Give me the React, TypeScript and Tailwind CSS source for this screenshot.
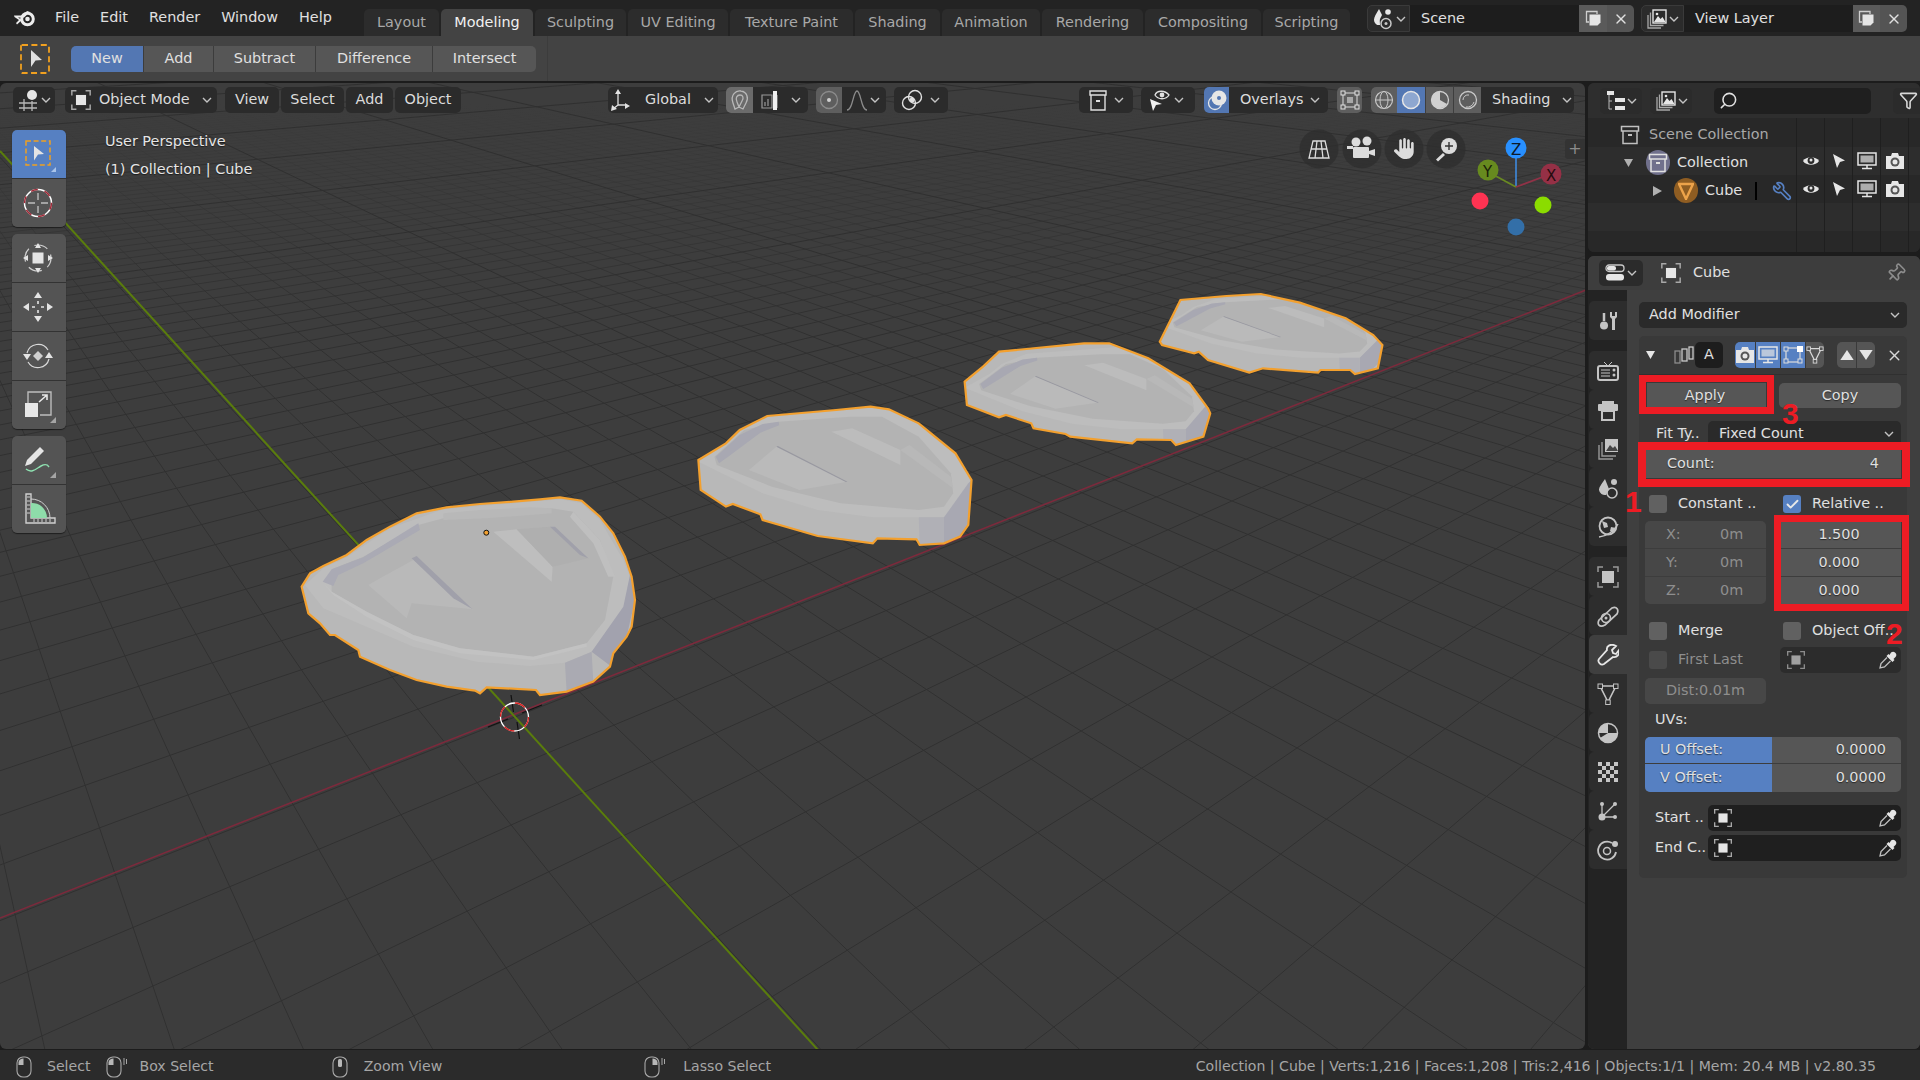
import { Search, Filter, Pin, X, Wrench, Check } from "lucide-react";
import { FaHand } from "react-icons/fa6";
import type { ReactNode } from "react";

const shadow = "[text-shadow:0_1px_1px_rgba(0,0,0,0.55)]";

/* ---------- small icons ---------- */
function Chev({ className = "" }: { className?: string }) {
  return (
    <svg width="10" height="6" viewBox="0 0 10 6" className={className}>
      <path d="M1 1l4 4 4-4" fill="none" stroke="#c4c4c4" strokeWidth="1.4" />
    </svg>
  );
}

function ObjIcon({ size = 22, fill = "#e6e6e6", line = "#a8a8a8" }: { size?: number; fill?: string; line?: string }) {
  return (
    <svg width={size} height={size} viewBox="0 0 24 24">
      <path d="M2 7V2h5M17 2h5v5M22 17v5h-5M7 22H2v-5" fill="none" stroke={line} strokeWidth="1.6" />
      <rect x="6.5" y="6.5" width="11" height="11" fill={fill} />
    </svg>
  );
}

function SelectIcon() {
  return (
    <svg width="32" height="32" viewBox="0 0 32 32">
      <rect x="2" y="2" width="28" height="28" fill="none" stroke="#f0a020" strokeWidth="1.8" strokeDasharray="6 3.4" rx="1" />
      <path d="M12 7l11 10-6.5 .5L12 24z" fill="#e0e0e0" />
    </svg>
  );
}

function Logo() {
  return (
    <svg width="23" height="18" viewBox="0 0 23 18">
      <circle cx="14.5" cy="10" r="5.8" fill="none" stroke="#ececec" strokeWidth="3" />
      <path d="M1 6.5h9l4-4.500 3 1-6 5.500H5l4 2.500-5 4.500-1-1.500 3-3-4.500-3z" fill="#ececec" />
      <circle cx="14.500" cy="10" r="2.300" fill="#ececec" />
    </svg>
  );
}

function ViewIcon() {
  return (
    <svg width="22" height="22" viewBox="0 0 22 22">
      <circle cx="14" cy="6" r="5" fill="#e6e6e6" />
      <path d="M1 14h18M1 19h18M6 10v12M14 12v10" stroke="#b8b8b8" strokeWidth="1.3" fill="none" />
    </svg>
  );
}

function CollectionIcon({ color = "#d0d0d0" }: { color?: string }) {
  return (
    <svg width="20" height="20" viewBox="0 0 20 20">
      <path d="M1.500 1.500h17v4.500h-17zM3 6v12.500h14V6" fill="none" stroke={color} strokeWidth="1.5" />
      <rect x="8" y="9" width="4" height="2" fill={color} />
    </svg>
  );
}

function LayersIcon() {
  return (
    <svg width="22" height="22" viewBox="0 0 22 22">
      <path d="M2 7v13h13M4.500 4.500v13h13" fill="none" stroke="#a8a8a8" strokeWidth="1.300" />
      <rect x="7" y="2" width="13" height="13" fill="none" stroke="#e6e6e6" strokeWidth="1.400" />
      <path d="M8 14l4-6 2.500 3 2-2 3 5z" fill="#e6e6e6" />
      <circle cx="11" cy="6" r="1.300" fill="#e6e6e6" />
    </svg>
  );
}

function SceneIcon() {
  return (
    <svg width="24" height="24" viewBox="0 0 24 24">
      <path d="M8 2C5 7 3 10 3 13a5 5 0 0 0 6 5" fill="#e6e6e6" />
      <path d="M8 2l3 6-3 6z" fill="#e6e6e6" />
      <circle cx="15" cy="16.500" r="5" fill="none" stroke="#c8c8c8" strokeWidth="1.500" />
      <circle cx="15" cy="16.500" r="1.500" fill="#c8c8c8" />
      <circle cx="17" cy="5" r="2.800" fill="#e6e6e6" />
    </svg>
  );
}

function Dup() {
  return (
    <svg width="17" height="17" viewBox="0 0 17 17">
      <path d="M4 12H1.500V1.500H12V4" fill="none" stroke="#cfcfcf" strokeWidth="1.300" />
      <path d="M4.500 4.500h11v8l-3 3h-8z" fill="#e6e6e6" />
    </svg>
  );
}

function Eye() {
  return (
    <svg width="18" height="14" viewBox="0 0 18 14">
      <path d="M1 7c3-5 13-5 16 0-3 5-13 5-16 0z" fill="#e6e6e6" />
      <circle cx="9" cy="6.500" r="3.400" fill="#2b2b2b" />
      <circle cx="9" cy="6" r="1.500" fill="#e6e6e6" />
    </svg>
  );
}

function Arrow() {
  return (
    <svg width="14" height="16" viewBox="0 0 14 16">
      <path d="M1 1l12 6.500-5 1.500-3 6z" fill="#e6e6e6" />
    </svg>
  );
}

function Monitor({ stroke = "#e6e6e6" }: { stroke?: string }) {
  return (
    <svg width="20" height="18" viewBox="0 0 20 18">
      <rect x="1" y="1" width="18" height="12" fill="none" stroke={stroke} strokeWidth="1.500" />
      <rect x="3.500" y="3.500" width="13" height="7" fill={stroke} opacity=".7" />
      <path d="M10 13v3M5 16.500h10" stroke={stroke} strokeWidth="1.500" />
    </svg>
  );
}

function Camera() {
  return (
    <svg width="20" height="18" viewBox="0 0 20 18">
      <path d="M1 4h5l1-3h6l1 3h5v13H1z" fill="#e6e6e6" />
      <circle cx="10" cy="10" r="4.500" fill="#555" />
      <circle cx="10" cy="10" r="2.500" fill="#e6e6e6" />
    </svg>
  );
}

function MeshIcon({ stroke = "#d8d8d8" }: { stroke?: string }) {
  return (
    <svg width="20" height="20" viewBox="0 0 20 20">
      <path d="M3 3h14l-7 14z" fill="none" stroke={stroke} strokeWidth="1.400" />
      <rect x="1" y="1" width="4" height="4" fill="#555" stroke={stroke} />
      <rect x="15" y="1" width="4" height="4" fill="#555" stroke={stroke} />
      <rect x="8" y="15" width="4" height="4" fill="#555" stroke={stroke} />
    </svg>
  );
}

function Caret({ up }: { up?: boolean }) {
  return (
    <svg width="14" height="10" viewBox="0 0 12 9">
      <path d={up ? "M0 9L6 0l6 9z" : "M0 0l6 9 6-9z"} fill="#e6e6e6" />
    </svg>
  );
}

function Dropper() {
  return (
    <svg width="20" height="20" viewBox="0 0 20 20" className="ml-auto mr-[3px]">
      <path d="M13 2.500a3.200 3.200 0 0 1 4.500 4.500l-2 2 1 1-2 2-6-6 2-2 1 1z" fill="#e6e6e6" />
      <path d="M9 7.500l-6 6-1 4.500 4.500-1 6-6" fill="none" stroke="#c0c0c0" strokeWidth="1.300" />
    </svg>
  );
}

/* left tool strip */
const corner = <path d="M36 36h-6l6-6z" fill="#a5a5a5" />;
const tools: { icon: ReactNode; on?: boolean; last?: boolean }[][] = [
  [
    { on: true, icon: <><rect x="6" y="5" width="24" height="24" fill="none" stroke="#f0a020" strokeWidth="1.500" strokeDasharray="5 2.600" /><path d="M14 10l10 8-6 .5-4 6z" fill="#e4e4e4" /><path d="M36 36h-5l5-5z" fill="#a9c4ea" /></> },
    { icon: <><circle cx="18" cy="18" r="13.500" fill="none" stroke="#fff" strokeWidth="1.500" /><circle cx="18" cy="18" r="13.500" fill="none" stroke="#a02a38" strokeWidth="1.500" strokeDasharray="7 7" /><path d="M18 8v7M18 21v7M8 18h7M21 18h7" stroke="#bdbdbd" strokeWidth="1.400" /></> },
  ],
  [
    { icon: <><rect x="12.500" y="12.500" width="11" height="11" fill="#e4e4e4" /><circle cx="18" cy="18" r="13" fill="none" stroke="#cfcfcf" strokeWidth="1.200" strokeDasharray="14 6.400" strokeDashoffset="4" /><path d="M18 3l3 5h-6zM18 33l3-5h-6zM3 18l5-3v6zM33 18l-5-3v6z" fill="#e4e4e4" /></> },
    { icon: <><path d="M18 3l4 6h-8zM18 33l4-6h-8zM3 18l6-4v8zM33 18l-6-4v8z" fill="#e4e4e4" /><path d="M18 12v3M18 21v3M12 18h3M21 18h3" stroke="#e4e4e4" strokeWidth="1.600" /></> },
    { icon: <><path d="M18 13l5 5-5 5-5-5z" fill="#cfcfcf" /><path d="M7 15a11.500 11.500 0 0 1 21-3M29 21a11.500 11.500 0 0 1-21 3" fill="none" stroke="#d8d8d8" strokeWidth="1.200" /><path d="M3 16h8l-4 6zM25 20h8l-4-6z" fill="#e4e4e4" /></> },
    { icon: <><path d="M8 16V5h23v23H20" fill="none" stroke="#bdbdbd" strokeWidth="1.400" /><rect x="5" y="16" width="13" height="14" fill="#e8e8e8" /><path d="M19 15l8-7M22 8h5v5" fill="none" stroke="#e8e8e8" strokeWidth="1.600" /></>, last: true },
  ],
  [
    { icon: <><path d="M5 24l2-6L20 5l4 4L11 22z" fill="#e4e4e4" /><path d="M6 27c6 5 11-1 15-3s6-2 8 1" fill="none" stroke="#8ee0b0" strokeWidth="1.400" /></>, last: true },
    { icon: <><path d="M6 3h5v24h24v5H6z" fill="none" stroke="#cfcfcf" strokeWidth="1.400" /><path d="M7 6h3M7 10h3M7 14h3M7 18h3M7 22h3M14 28v3M18 28v3M22 28v3M26 28v3M30 28v3" stroke="#cfcfcf" /><path d="M11 12a15 15 0 0 1 16 15H11z" fill="#8edcaa" /><path d="M11 8a19 19 0 0 1 19 19" fill="none" stroke="#cfcfcf" strokeWidth="1" /></> },
  ],
];

/* ---------- 3D view drawing ---------- */
const origin = [515, 717];
const vpA = [2480, -60];
const vpB = [-200, -60];
const kA = 0.0338;
const kB = 0.0441;

function project(x: number, y: number) {
  const w = 1 + x * kA + y * kB;
  return `${((origin[0] + x * kA * vpA[0] + y * kB * vpB[0]) / w).toFixed(1)} ${((origin[1] + x * kA * vpA[1] + y * kB * vpB[1]) / w).toFixed(1)}`;
}

function gridPath(step: number, fine: boolean) {
  let d = "";
  for (let c = -40; c <= 400; c += step) {
    if (fine && c % 10 === 0) continue;
    const yStart = (0.04 - (1 + c * kA)) / kB;
    const xStart = (0.04 - (1 + c * kB)) / kA;
    d += `M${project(c, yStart)}L${project(c, 500)}`;
    d += `M${project(xStart, c)}L${project(500, c)}`;
  }
  return d;
}

type Poly = [string, string];

const bigShield = "65,320 90,280 130,258 200,225 260,180 330,140 410,100 500,82 600,72 700,65 780,58 840,52 905,62 960,110 1000,160 1035,230 1055,290 1065,360 1055,440 1040,470 1000,520 990,560 940,605 860,635 780,645 768,630 620,622 600,640 585,632 500,620 410,600 330,570 240,530 235,510 165,465 150,465 120,430 85,400";
const bigParts: Poly[] = [
  ["75,315 130,265 200,232 330,145 490,88 700,70 840,58 905,70 960,120 1030,240 1050,290 1040,370 1020,400 935,515 855,548 750,558 590,545 400,500 130,385", "#bdbdbd"],
  ["155,335 260,395 400,465 540,505 760,530 920,490 975,420 1000,290 960,180 880,95 815,85 620,110 490,115 415,135 250,230 155,268", "#b3b3b3"],
  ["128,305 155,268 250,232 415,130 420,150 250,250 175,285 160,318", "#aaaab4"],
  ["490,100 600,90 750,82 815,85 815,100 620,115 490,120", "#b8b8b8"],
  ["880,95 960,180 1005,290 985,290 940,190 870,110", "#bfbfbf"],
  ["155,335 130,310 160,345 260,410 400,480 540,520 760,540 920,500 920,490 760,530 540,505 400,465 260,395", "#c2c2c2"],
  ["265,315 300,295 400,240 578,388 395,370 380,415", "#b9b9b9"],
  ["395,235 410,228 578,388 520,355", "#a0a0aa"],
  ["640,155 710,148 818,260 815,305", "#bebebe"],
  ["710,148 810,140 925,235 818,260", "#afafaf"],
  ["810,140 825,140 925,235 900,225", "#a0a0aa"],
  ["935,515 995,560 1040,470 1065,360 1050,285 1030,380", "#a2a2ae"],
  ["855,548 935,515 940,605 860,635", "#aaaab2"],
];

const farParts: Poly[] = [
  ["40,545 100,490 130,450 190,408 340,390 415,380 455,388 520,430 600,520 635,600 610,680 575,712 420,712 300,690 180,640", "#bdbdbd"],
  ["75,530 140,450 215,425 370,410 440,410 520,470 590,580 595,640 575,680 520,690 350,670 200,620 80,555", "#b3b3b3"],
  ["78,530 130,465 180,432 215,425 216,436 175,458 105,530 85,550", "#a8a8b2"],
  ["150,570 210,500 365,605 260,630", "#bababa"],
  ["330,455 375,445 480,510 480,555", "#bcbcbc"],
  ["210,500 213,498 365,605 361,606", "#9898a0"],
  ["480,510 500,495 590,590 595,625", "#b8b8b8"],
  ["575,712 628,610 635,600 628,735 610,770 575,790", "#a8a8b2"],
  ["520,712 575,712 575,790 522,795", "#b0b0b6"],
];

const shields = [
  {
    outline: "40,540 100,490 130,450 190,408 340,390 415,380 455,388 520,430 600,520 635,600 628,735 610,770 575,790 522,795 515,778 430,775 420,790 300,768 180,720 175,703 115,672 100,680 45,630",
    detail: "",
  },
  {
    outline: "620,305 660,260 695,215 880,190 935,190 1020,235 1110,310 1150,385 1155,400 1140,470 1080,495 1070,480 995,478 985,490 850,470 840,462 770,445 765,430 710,405 695,412 625,375",
    detail: "translate(584,-83) scale(0.9,0.745)",
  },
  {
    outline: "1045,185 1065,130 1090,60 1190,48 1265,42 1350,68 1450,115 1510,165 1530,195 1520,265 1470,282 1460,270 1395,270 1390,278 1270,265 1240,278 1150,240 1130,215 1120,220 1050,195",
    detail: "translate(1012,-180) scale(0.815,0.58)",
  },
];

function Viewport3D() {
  return (
    <svg className="absolute inset-0" width="1586" height="967" viewBox="0 83 1586 967">
      <defs>
        <linearGradient id="fade" gradientUnits="userSpaceOnUse" x1="0" y1="100" x2="0" y2="330">
          <stop offset="0" stopColor="#303030" stopOpacity="0" />
          <stop offset="1" stopColor="#303030" stopOpacity="1" />
        </linearGradient>
        <clipPath id="big"><polygon points={bigShield} /></clipPath>
        {shields.map((s, i) => (
          <clipPath id={`far${i}`} key={i}><polygon points={s.outline} /></clipPath>
        ))}
      </defs>
      <path d={gridPath(1, true)} stroke="url(#fade)" strokeWidth="1" fill="none" />
      <path d={gridPath(10, false)} stroke="#303030" strokeWidth="1" fill="none" />
      <path d="M0 918L1586 290" stroke="#7c2a3c" strokeWidth="1.600" />
      <path d="M0 151L818 1050" stroke="#5a7d0c" strokeWidth="2" />

      {/* 3D cursor */}
      <path d="M511 695l2.500 17M517 722l2.500 17M488 727l20-8M522 713l20-8" stroke="#111" strokeWidth="1.200" />
      <circle cx="514.500" cy="717" r="14" fill="none" stroke="#fff" strokeWidth="1.300" />
      <circle cx="514.500" cy="717" r="14" fill="none" stroke="#d82020" strokeWidth="1.300" strokeDasharray="11 11" />

      {/* near object */}
      <g transform="translate(280,480) scale(0.3333)">
        <polygon points={bigShield} fill="#b8b8b8" />
        <g clipPath="url(#big)">
          {bigParts.map(([p, f], i) => <polygon key={i} points={p} fill={f} />)}
        </g>
        <polygon points={bigShield} fill="none" stroke="#f3a02e" strokeWidth="2.200" vectorEffect="non-scaling-stroke" />
      </g>
      <circle cx="486.300" cy="532.700" r="2.500" fill="#f3a02e" stroke="#111" strokeWidth="1" />

      {/* array copies */}
      <g transform="translate(680,280) scale(0.4591,0.3333)">
        {shields.map((s, i) => (
          <g key={i}>
            <polygon points={s.outline} fill="#b8b8b8" />
            <g clipPath={`url(#far${i})`}>
              <g transform={s.detail}>
                {farParts.map(([p, f], j) => <polygon key={j} points={p} fill={f} />)}
              </g>
            </g>
            <polygon points={s.outline} fill="none" stroke="#f3a02e" strokeWidth="2.200" vectorEffect="non-scaling-stroke" />
          </g>
        ))}
      </g>

      {/* axis gizmo */}
      <path d="M1516 187V150" stroke="#3f8fe8" strokeWidth="1.500" />
      <path d="M1516 187l-24-13" stroke="#6a8a22" strokeWidth="1.800" />
      <path d="M1516 187l32-12" stroke="#913247" strokeWidth="1.800" />
      <circle cx="1516" cy="148" r="10.500" fill="#2890ff" />
      <circle cx="1488" cy="170" r="10.500" fill="#678a1f" />
      <circle cx="1551" cy="174" r="10.500" fill="#953046" />
      <circle cx="1480" cy="201" r="8.500" fill="#ff3352" />
      <circle cx="1543" cy="205" r="8.500" fill="#8bdc00" />
      <circle cx="1516" cy="227" r="8.500" fill="#336fa8" />
      {[[1319, 149], [1362, 149], [1404, 149], [1446, 149]].map(([x, y]) => (
        <circle key={x} cx={x} cy={y} r="19.500" fill="#2e2e2e" fillOpacity=".75" />
      ))}
      <g fill="none" stroke="#dcdcdc" strokeWidth="1.300">
        <path d="M1313 141h12l4 17h-20zM1311 149h16M1317 141l-2 17M1321 141l2 17" />
      </g>
      <g fill="#dcdcdc">
        <circle cx="1356" cy="142" r="4.500" /><circle cx="1367" cy="141" r="4.500" />
        <rect x="1353" y="147" width="16" height="11" rx="1" /><path d="M1369 151l6-2v7l-6-2zM1347 146h6v3h-6z" />
      </g>
      <g fill="#dcdcdc">
        <circle cx="1449" cy="146" r="8" />
        <path d="M1443 153l2 2-7 6.500-2-2z" />
      </g>
      <path d="M1445 146h8M1449 142v8" stroke="#333" strokeWidth="1.400" />
    </svg>
  );
}

/* ---------- shared pieces ---------- */
function Btn({ className = "", bg = "bg-[#2b2b2b]", children }: { className?: string; bg?: string; children?: ReactNode }) {
  return <div className={`h-[26px] shrink-0 rounded-[5px] flex items-center ${bg} ${className}`}>{children}</div>;
}

function Box({ on, dim }: { on?: boolean; dim?: boolean }) {
  return (
    <div className={`w-[18px] h-[18px] rounded-[3px] shrink-0 flex items-center justify-center ${on ? "bg-[#5680c2]" : dim ? "bg-[#4a4a4a]" : "bg-[#616161]"}`}>
      {on && <Check size={15} strokeWidth={3} color="#e8e8e8" />}
    </div>
  );
}

const tabs = [
  ["Layout", "w-[75px]"],
  ["Modeling", "w-[92px]"],
  ["Sculpting", "w-[91px]"],
  ["UV Editing", "w-[100px]"],
  ["Texture Paint", "w-[123px]"],
  ["Shading", "w-[85px]"],
  ["Animation", "w-[98px]"],
  ["Rendering", "w-[101px]"],
  ["Compositing", "w-[116px]"],
  ["Scripting", "w-[87px]"],
];

function TopBar() {
  return (
    <div className="h-9 shrink-0 bg-[#232323] flex text-[14.4px] text-[#e0e0e0]">
      <div className="w-[364px] shrink-0 flex items-center pl-[13px] h-full">
        <Logo />
        <div className="flex gap-[21px] ml-[19px] pb-[1px]">
          <span>File</span>
          <span>Edit</span>
          <span>Render</span>
          <span>Window</span>
          <span>Help</span>
        </div>
      </div>
      <div className="flex gap-[2px] pt-[9px]">
        {tabs.map(([t, w]) => (
          <div key={t} className={`${w} h-[27px] rounded-t-[5px] flex items-center justify-center ${t === "Modeling" ? "bg-[#434343] text-[#f0f0f0]" : "bg-[#2c2c2c] text-[#a8a8a8]"}`}>{t}</div>
        ))}
      </div>
      <div className="flex ml-[17px] mt-[5px] h-[27px]">
        <div className="w-[43px] rounded-l-[5px] bg-[#2b2b2b] border border-[#3a3a3a] flex items-center justify-center gap-[1px]"><SceneIcon /><Chev /></div>
        <div className="w-[169px] bg-[#1d1d1d] flex items-center pl-[11px]">Scene</div>
        <div className="w-[28px] bg-[#5a5a5a] flex items-center justify-center"><Dup /></div>
        <div className="w-[27px] rounded-r-[5px] bg-[#545454] flex items-center justify-center"><X size={16} color="#e0e0e0" /></div>
      </div>
      <div className="flex ml-[7px] mt-[5px] h-[27px]">
        <div className="w-[43px] rounded-l-[5px] bg-[#2b2b2b] border border-[#3a3a3a] flex items-center justify-center gap-[1px]"><LayersIcon /><Chev /></div>
        <div className="w-[169px] bg-[#1d1d1d] flex items-center pl-[11px]">View Layer</div>
        <div className="w-[27px] bg-[#5a5a5a] flex items-center justify-center"><Dup /></div>
        <div className="w-[27px] rounded-r-[5px] bg-[#545454] flex items-center justify-center"><X size={16} color="#e0e0e0" /></div>
      </div>
    </div>
  );
}

const modes = [
  ["New", "w-[72px] bg-[#5377b3] rounded-l-[5px]"],
  ["Add", "w-[70px] bg-[#565656] border-l border-[#3c3c3c]"],
  ["Subtract", "w-[102px] bg-[#565656] border-l border-[#3c3c3c]"],
  ["Difference", "w-[117px] bg-[#565656] border-l border-[#3c3c3c]"],
  ["Intersect", "w-[104px] bg-[#565656] border-l border-[#3c3c3c] rounded-r-[5px]"],
];

function ToolSettings() {
  return (
    <div className="h-[45px] shrink-0 bg-[#434343] flex items-center pl-[19px] text-[14.4px] text-[#e0e0e0]">
      <SelectIcon />
      <div className="flex ml-[20px] h-[26px]">
        {modes.map(([t, c]) => (
          <div key={t} className={`${c} flex items-center justify-center`}>{t}</div>
        ))}
      </div>
      <div className="ml-[11px] w-px h-full bg-[#3c3c3c]" />
    </div>
  );
}

function ViewportHeader() {
  return (
    <div className="relative flex items-center h-[26px] mt-[4px] ml-[13px] text-[14.4px] text-[#dcdcdc]">
      <Btn className="w-[42px] justify-center gap-[1px]"><ViewIcon /><Chev /></Btn>
      <Btn className="w-[152px] ml-[10px] pl-[5px]"><ObjIcon size={22} /><span className="ml-[7px] whitespace-nowrap">Object Mode</span><Chev className="ml-[12px]" /></Btn>
      <Btn className="w-[54px] ml-[8px] justify-center">View</Btn>
      <Btn className="w-[63px] ml-[2px] justify-center">Select</Btn>
      <Btn className="w-[47px] ml-[2px] justify-center">Add</Btn>
      <Btn className="w-[66px] ml-[2px] justify-center">Object</Btn>
      <Btn className="w-[110px] ml-[147px] pl-[1px]">
        <svg width="22" height="24" viewBox="0 0 22 24"><path d="M9 1l3 5H6zM21 18l-5 3v-6zM2 23l1-6 5 4z" fill="#e0e0e0" /><path d="M9 5v12M9 17h8M9 17l-5 4" stroke="#e0e0e0" strokeWidth="1.300" /></svg>
        <span className="ml-[14px]">Global</span><Chev className="ml-[13px]" />
      </Btn>
      <Btn className="w-[82px] ml-[8px] overflow-hidden">
        <div className="w-[27px] h-full bg-[#6b6b6b] flex items-center justify-center">
          <svg width="20" height="22" viewBox="0 0 20 22"><path d="M3 14C0 6 6 1 11 2c6 1 8 7 5 12l-3 6-4-2 3-6c2-3 1-6-2-6-3 0-5 3-3 7l2 5-4 2z" fill="none" stroke="#b8b8b8" strokeWidth="1.300" /></svg>
        </div>
        <svg className="ml-[8px]" width="22" height="22" viewBox="0 0 22 22"><path d="M1 6h10v13H1zM16 6v13" fill="none" stroke="#999" strokeWidth="1.200" /><path d="M4 17v-4M7 17v-7" stroke="#999" strokeWidth="1.200" /><rect x="12" y="2" width="4" height="19" fill="#f0f0f0" /></svg>
        <Chev className="ml-[8px]" />
      </Btn>
      <Btn className="w-[70px] ml-[8px] overflow-hidden">
        <div className="w-[26px] h-full bg-[#5e5e5e] flex items-center justify-center">
          <svg width="20" height="20" viewBox="0 0 20 20"><circle cx="10" cy="10" r="8.500" fill="none" stroke="#8c8c8c" strokeWidth="1.300" /><circle cx="10" cy="10" r="2" fill="#d0d0d0" /></svg>
        </div>
        <svg className="ml-[4px]" width="22" height="22" viewBox="0 0 22 22"><path d="M1 21C7 21 7 2 11 2s4 19 10 19" fill="none" stroke="#8c8c8c" strokeWidth="1.300" /></svg>
        <Chev className="ml-[2px]" />
      </Btn>
      <Btn className="w-[54px] ml-[8px] pl-[7px]">
        <svg width="22" height="22" viewBox="0 0 22 22"><circle cx="8" cy="14" r="6.500" fill="none" stroke="#e0e0e0" strokeWidth="1.400" /><circle cx="14" cy="8" r="6.500" fill="none" stroke="#e0e0e0" strokeWidth="1.400" /><circle cx="11" cy="11" r="2.500" fill="#e0e0e0" /></svg>
        <Chev className="ml-[7px]" />
      </Btn>
      <Btn className="w-[54px] ml-[131px] pl-[9px]">
        <svg width="20" height="22" viewBox="0 0 20 22"><path d="M2 2h16v4H2zM3 6v15h14V6" fill="none" stroke="#e0e0e0" strokeWidth="1.400" /><rect x="8" y="11" width="4" height="2" fill="#e0e0e0" /></svg>
        <Chev className="ml-[6px]" />
      </Btn>
      <Btn className="w-[54px] ml-[8px] pl-[7px]">
        <svg width="22" height="24" viewBox="0 0 22 24"><path d="M2 11l3 12 3-6 6-1z" fill="#f0f0f0" /><path d="M7 7c2-5 10-5 14 0-3 5-11 5-14 0z" fill="none" stroke="#e0e0e0" strokeWidth="1.300" /><circle cx="14" cy="7" r="2.400" fill="#e0e0e0" /></svg>
        <Chev className="ml-[4px]" />
      </Btn>
      <Btn className="w-[124px] ml-[9px] overflow-hidden">
        <div className="w-[25px] h-full bg-[#5377b3] flex items-center justify-center">
          <svg width="22" height="22" viewBox="0 0 22 22"><circle cx="9" cy="14" r="6.500" fill="none" stroke="#e6e6e6" strokeWidth="1.300" /><circle cx="13" cy="9" r="7.500" fill="#e6e6e6" /><circle cx="13" cy="9" r="2" fill="#5377b3" /></svg>
        </div>
        <span className="ml-[11px]">Overlays</span><Chev className="ml-[7px]" />
      </Btn>
      <div className="w-[25px] h-[26px] ml-[9px] rounded-[5px] bg-[#5e5e5e] flex items-center justify-center">
        <svg width="22" height="22" viewBox="0 0 22 22"><rect x="4" y="4" width="14" height="14" fill="none" stroke="#c8c8c8" strokeWidth="1.200" /><g fill="#5e5e5e" stroke="#e0e0e0"><rect x="2" y="2" width="4" height="4" /><rect x="16" y="2" width="4" height="4" /><rect x="2" y="16" width="4" height="4" /><rect x="16" y="16" width="4" height="4" /></g><rect x="8" y="8" width="6" height="6" fill="#a8a8a8" /></svg>
      </div>
      <Btn className="w-[203px] ml-[9px] overflow-hidden">
        <div className="w-[26px] h-full bg-[#5e5e5e] flex items-center justify-center">
          <svg width="20" height="20" viewBox="0 0 20 20"><circle cx="10" cy="10" r="8.500" fill="none" stroke="#c8c8c8" strokeWidth="1.200" /><ellipse cx="10" cy="10" rx="4" ry="8.500" fill="none" stroke="#c8c8c8" /><path d="M1.500 10h17" stroke="#c8c8c8" /></svg>
        </div>
        <div className="w-[28px] h-full bg-[#5377b3] flex items-center justify-center">
          <svg width="20" height="20" viewBox="0 0 20 20"><circle cx="10" cy="10" r="8.500" fill="#8ea7d0" stroke="#e6e6e6" strokeWidth="1.500" /></svg>
        </div>
        <div className="w-[28px] h-full bg-[#5e5e5e] border-l border-[#3e3e3e] flex items-center justify-center">
          <svg width="20" height="20" viewBox="0 0 20 20"><circle cx="10" cy="10" r="8.500" fill="none" stroke="#d0d0d0" strokeWidth="1.300" /><path d="M10 1.500V10l7 4A8.500 8.500 0 0 1 4 16 8.500 8.500 0 0 1 10 1.500z" fill="#d0d0d0" /></svg>
        </div>
        <div className="w-[28px] h-full bg-[#5e5e5e] border-l border-[#3e3e3e] flex items-center justify-center">
          <svg width="20" height="20" viewBox="0 0 20 20"><circle cx="10" cy="10" r="8.500" fill="none" stroke="#c8c8c8" strokeWidth="1.300" /><path d="M5 10a5 5 0 0 1 6-5M8 17a7 7 0 0 0 8-5" fill="none" stroke="#c8c8c8" /></svg>
        </div>
        <span className="ml-[11px]">Shading</span><Chev className="ml-[12px]" />
      </Btn>
    </div>
  );
}

function Toolbar() {
  return (
    <div className="relative w-[54px] ml-[12px] mt-[17px] flex flex-col gap-[7px]">
      {tools.map((group, i) => (
        <div key={i} className="rounded-[5px] overflow-hidden flex flex-col gap-[1px] bg-[#333] shadow-[0_1px_1px_rgba(0,0,0,0.5)]">
          {group.map((tool, j) => (
            <div key={j} className={`h-[48px] flex items-center justify-center ${tool.on ? "bg-[#5680c2]" : "bg-[#545454]"}`}>
              <svg width="36" height="36" viewBox="0 0 36 36" className="-translate-x-[1px]">
                {tool.icon}
                {tool.last && corner}
              </svg>
            </div>
          ))}
        </div>
      ))}
    </div>
  );
}

function Viewport() {
  return (
    <div className="relative w-[1585px] h-full rounded-[6px] overflow-hidden bg-[#3d3d3d] shrink-0">
      <Viewport3D />
      <ViewportHeader />
      <Toolbar />
      <div className={`absolute left-[105px] top-[44px] text-[14.4px] text-[#e6e6e6] leading-[28px] ${shadow}`}>
        <div>User Perspective</div>
        <div>(1) Collection | Cube</div>
      </div>
      <FaHand className="absolute left-[1394px] top-[55px]" size={21} color="#dcdcdc" />
      {/* axis letters */}
      <span className="absolute left-[1511px] top-[56px] text-[15px] text-[#0c1a2a]">Z</span>
      <span className="absolute left-[1483px] top-[78px] text-[15px] text-[#182008]">Y</span>
      <span className="absolute left-[1546px] top-[82px] text-[15px] text-[#250c10]">X</span>
      <div className="absolute left-[1565px] top-[56px] w-[20px] h-[20px] rounded-l-[3px] bg-[#333] flex items-center justify-center text-[#8c8c8c] text-[16px]">+</div>
    </div>
  );
}

/* ---------- outliner ---------- */
function OutlinerCells({ icons }: { icons?: boolean }) {
  const cell = "w-[28px] h-full border-l border-[#1f1f1f] flex items-center justify-center";
  return (
    <div className="flex h-full shrink-0">
      <div className={cell}>{icons && <Eye />}</div>
      <div className={cell}>{icons && <Arrow />}</div>
      <div className={cell}>{icons && <Monitor />}</div>
      <div className={cell}>{icons && <Camera />}</div>
      <div className="w-[12px] border-l border-[#1f1f1f]" />
    </div>
  );
}

function Outliner() {
  return (
    <div className="h-[169px] rounded-[6px] overflow-hidden bg-[#2b2b2b] flex flex-col text-[14.4px] text-[#e0e0e0] shrink-0">
      <div className="h-[35px] shrink-0 bg-[#2e2e2e] flex items-center pl-[12px]">
        <Btn className="w-[42px] justify-center gap-[1px]">
          <svg width="20" height="22" viewBox="0 0 20 22"><rect x="1" y="1" width="7" height="4" fill="#e6e6e6" /><path d="M3 5v14h3M3 11h3" stroke="#b8b8b8" fill="none" /><rect x="9" y="8" width="10" height="4" fill="#e6e6e6" /><rect x="9" y="16" width="10" height="4" fill="#e6e6e6" /></svg>
          <Chev />
        </Btn>
        <Btn className="w-[42px] ml-[8px] justify-center gap-[1px]"><LayersIcon /><Chev /></Btn>
        <Btn className="w-[157px] ml-[22px] pl-[5px]" bg="bg-[#1f1f1f]"><Search size={19} color="#e0e0e0" className="-scale-x-100" /></Btn>
        <Btn className="w-[40px] ml-[22px] pl-[6px] rounded-r-none"><Filter size={19} color="#d8d8d8" /></Btn>
      </div>
      <div className="h-[29px] shrink-0 bg-[#282828] flex">
        <div className="flex-1 flex items-center pl-[32px] pt-[4px] text-[#a8a8a8]"><CollectionIcon color="#c0c0c0" /><span className="ml-[9px]">Scene Collection</span></div>
        <OutlinerCells />
      </div>
      <div className="h-[28px] shrink-0 bg-[#2d2d2d] flex">
        <div className="flex-1 flex items-center pl-[36px] pt-[3px]">
          <svg width="10" height="8" viewBox="0 0 10 8"><path d="M0 0h9L4.500 8z" fill="#b0b0b0" /></svg>
          <div className="w-[24px] h-[25px] ml-[12px] rounded-full bg-[#70708c] flex items-center justify-center"><CollectionIcon color="#e0e0e0" /></div>
          <span className="ml-[7px]">Collection</span>
        </div>
        <OutlinerCells icons />
      </div>
      <div className="h-[28px] shrink-0 bg-[#282828] flex">
        <div className="flex-1 flex items-center pl-[65px] pt-[3px]">
          <svg width="10" height="10" viewBox="0 0 10 10"><path d="M0 0l9 5-9 5z" fill="#b0b0b0" /></svg>
          <div className="w-[24px] h-[25px] ml-[11px] rounded-full bg-[#8f5d22] flex items-center justify-center">
            <svg width="16" height="18" viewBox="0 0 16 18"><path d="M1 2h14L8 17z" fill="none" stroke="#eda34a" strokeWidth="2.400" /></svg>
          </div>
          <span className="ml-[7px]">Cube</span>
          <div className="w-[2px] h-[18px] ml-[13px] bg-black" />
          <Wrench size={20} color="#5680c2" className="ml-[15px] -scale-x-100" />
        </div>
        <OutlinerCells icons />
      </div>
      <div className="h-[28px] shrink-0 bg-[#2d2d2d] flex"><div className="flex-1" /><OutlinerCells /></div>
      <div className="flex-1 bg-[#282828] flex"><div className="flex-1" /><OutlinerCells /></div>
    </div>
  );
}

/* ---------- properties ---------- */
const c = "#c4c4c4";
const propTabs: { icon: ReactNode; on?: boolean }[][] = [
  [{ icon: <><path d="M7 3v8" stroke={c} strokeWidth="2.500" /><circle cx="7" cy="15.500" r="4" fill={c} /><path d="M13 2h2v4h3V2h2v5l-2 2v11h-3V9l-2-2z" fill={c} /></> }],
  [
    { icon: <><rect x="1" y="6" width="20" height="14" rx="2" fill="none" stroke={c} strokeWidth="2" /><path d="M7 2l4 4 4-4" stroke={c} fill="none" /><path d="M4 10h9M4 13h9M4 16h9" stroke={c} /><circle cx="17" cy="10" r="1.500" fill={c} /><circle cx="17" cy="15" r="1.500" fill={c} /></> },
    { icon: <><rect x="1" y="5" width="20" height="7" rx="1" fill={c} /><path d="M5 2h12v3H5z" fill={c} /><path d="M5 12h12v9H5z" fill="none" stroke={c} strokeWidth="2" /></> },
    { icon: <><path d="M2 7v14h14M5 4v14h14" fill="none" stroke="#999" strokeWidth="1.400" /><rect x="8" y="1" width="13" height="13" fill={c} /><path d="M9 13l4-6 3 3 2-2 3 5z" fill="#444" /></> },
    { icon: <><path d="M8 2C4 8 2 10 2 13a6 6 0 0 0 7 5l3-6z" fill={c} /><circle cx="15" cy="16" r="5" fill="none" stroke={c} strokeWidth="1.600" /><circle cx="17" cy="5" r="3" fill={c} /></> },
    { icon: <><circle cx="11" cy="10" r="8.500" fill="none" stroke={c} strokeWidth="1.800" /><path d="M5 5l5 2 1 4-4 1zM14 11l5 1-3 5-3-2z" fill={c} /><path d="M2 21c8-1 14-4 19-13" fill="none" stroke={c} strokeWidth="1.500" /></> },
  ],
  [
    { icon: <g transform="translate(-1,-1)"><path d="M2 7V2h5M17 2h5v5M22 17v5h-5M7 22H2v-5" fill="none" stroke="#999" strokeWidth="1.500" /><rect x="6" y="6" width="12" height="12" fill={c} /></g> },
    { icon: <><path d="M2 15L15 3c5-2 7 2 5 6L8 20c-6 3-8-1-6-5z" fill="none" stroke={c} strokeWidth="1.700" /><circle cx="9" cy="13" r="4.500" fill="none" stroke={c} strokeWidth="1.700" /><circle cx="9" cy="13" r="1.500" fill={c} /></> },
    { on: true, icon: <><path d="M19 2l-4 4 1 3 3 1 3-4c1 4-2 8-6 7L7 20c-3 2-7-2-5-5l8-9C9 2 14-1 19 2z" fill="none" stroke="#e6e6e6" strokeWidth="1.800" /></> },
    { icon: <><path d="M3 3h16l-8 16z" fill="none" stroke={c} strokeWidth="1.600" /><rect x="1" y="1" width="4.500" height="4.500" fill="#2d2d2d" stroke={c} /><rect x="16.500" y="1" width="4.500" height="4.500" fill="#2d2d2d" stroke={c} /><rect x="8.700" y="17" width="4.500" height="4.500" fill="#2d2d2d" stroke={c} /></> },
    { icon: <><circle cx="11" cy="11" r="9.500" fill="none" stroke={c} strokeWidth="1.500" /><path d="M11 1.500V11H1.500A9.500 9.500 0 0 1 11 1.500zM11 11h9.500A9.500 9.500 0 0 1 3 16z" fill={c} /></> },
    { icon: <>{[0, 1, 2, 3, 4].flatMap((r) => [0, 1, 2, 3, 4].map((k) => ((r + k) % 2 === 0 ? <rect key={`${r}${k}`} x={1 + k * 4} y={1 + r * 4} width="4" height="4" fill={c} /> : null)))}</> },
    { icon: <><path d="M5 17L5 4M5 17l13-13M5 17h13" stroke={c} strokeWidth="1.300" /><circle cx="5" cy="17" r="3.500" fill={c} /><circle cx="5" cy="4" r="2" fill={c} /><circle cx="18" cy="4" r="2" fill={c} /><circle cx="18" cy="17" r="2" fill={c} /></> },
    { icon: <><path d="M15 4A9 9 0 1 0 19 13" fill="none" stroke={c} strokeWidth="1.800" /><circle cx="10" cy="12" r="3.500" fill="none" stroke={c} strokeWidth="1.500" /><circle cx="18" cy="5" r="3" fill={c} /></> },
  ],
];

function PropTabs() {
  return (
    <div className="w-[39px] shrink-0 bg-[#232323] pt-[11px] flex flex-col gap-[11px] items-end">
      {propTabs.map((group, i) => (
        <div key={i} className="flex flex-col w-[38px]">
          {group.map((t, j) => (
            <div key={j} className={`h-[39px] rounded-l-[5px] flex items-center justify-center ${t.on ? "bg-[#3f3f3f]" : "bg-[#2d2d2d]"}`}>
              <svg width="22" height="22" viewBox="0 0 22 22">{t.icon}</svg>
            </div>
          ))}
        </div>
      ))}
    </div>
  );
}

function FieldRow({ label, value }: { label: string; value: string }) {
  return (
    <div className="h-[28px] last:h-[27px] flex items-center border-b border-[#3d3d3d] last:border-b-0 bg-[#474747] text-[#8e8e8e]">
      <span className="ml-[21px] w-[54px]">{label}</span>
      <span>{value}</span>
    </div>
  );
}

function ModifierPanel() {
  return (
    <div className="mt-[8px] ml-[12px] mr-[13px] h-[542px] rounded-[5px] bg-[#393939] flex flex-col shrink-0">
      {/* header */}
      <div className="h-[39px] shrink-0 flex items-center border-b border-[#303030]">
        <svg className="ml-[7px]" width="9" height="8" viewBox="0 0 9 8"><path d="M0 0h9L4.500 8z" fill="#e6e6e6" /></svg>
        <svg className="ml-[19px]" width="20" height="18" viewBox="0 0 20 18"><rect x="1" y="5" width="5" height="12" fill="none" stroke="#8c8c8c" strokeWidth="1.300" /><rect x="8" y="3" width="5" height="12" fill="none" stroke="#c8c8c8" strokeWidth="1.300" /><rect x="15" y="1" width="4" height="12" fill="none" stroke="#c8c8c8" strokeWidth="1.300" /></svg>
        <div className="ml-[1px] w-[28px] h-[26px] rounded-[5px] bg-[#1d1d1d] flex items-center justify-center">A</div>
        <div className="ml-[12px] w-[89px] h-[26px] rounded-[5px] overflow-hidden flex">
          <div className="w-[20px] bg-[#5680c2] flex items-center justify-center"><Camera /></div>
          <div className="w-[25px] bg-[#5680c2] border-l border-[#3a3a3a] flex items-center justify-center"><Monitor /></div>
          <div className="w-[25px] bg-[#5680c2] border-l border-[#3a3a3a] flex items-center justify-center">
            <svg width="20" height="20" viewBox="0 0 20 20"><rect x="3" y="3" width="14" height="14" fill="none" stroke="#dcdcdc" strokeWidth="1.200" /><g fill="#5680c2" stroke="#dcdcdc"><rect x="1" y="14" width="4" height="4" /><rect x="15" y="14" width="4" height="4" /><rect x="1" y="2" width="4" height="4" /></g><rect x="14" y="1" width="6" height="6" fill="#fff" /></svg>
          </div>
          <div className="w-[19px] bg-[#555] border-l border-[#3a3a3a] flex items-center justify-center"><MeshIcon /></div>
        </div>
        <div className="ml-[13px] w-[38px] h-[26px] rounded-[5px] overflow-hidden flex">
          <div className="w-[19px] bg-[#555] flex items-center justify-center"><Caret up /></div>
          <div className="w-[19px] bg-[#555] border-l border-[#3a3a3a] flex items-center justify-center"><Caret /></div>
        </div>
        <X size={17} color="#d8d8d8" className="ml-[11px]" />
      </div>

      {/* apply / copy */}
      <div className="flex mt-[8px] ml-[8px] h-[25px] shrink-0">
        <div className={`w-[119px] pr-[3px] bg-[#565656] flex items-center justify-center ${shadow}`}>Apply</div>
        <div className={`ml-[13px] w-[122px] rounded-[5px] bg-[#565656] flex items-center justify-center ${shadow}`}>Copy</div>
      </div>

      {/* fit type */}
      <div className="flex items-center mt-[13px] ml-[17px] shrink-0">
        <span className="w-[52px] whitespace-nowrap">Fit Ty..</span>
        <Btn className="w-[193px] pl-[11px]" bg="bg-[#2a2a2a]"><span>Fixed Count</span><Chev className="ml-auto mr-[7px]" /></Btn>
      </div>

      {/* count */}
      <div className={`mt-[3px] ml-[7px] w-[255px] h-[28px] bg-[#565656] flex items-center justify-between pl-[21px] pr-[22px] shrink-0 ${shadow}`}>
        <span>Count:</span><span>4</span>
      </div>

      {/* offsets */}
      <div className="grid grid-cols-[121px_121px] gap-x-[14px] ml-[6px] mt-[17px] shrink-0">
        <div className="flex items-center h-[18px] pl-[4px]"><Box /><span className="ml-[11px] whitespace-nowrap">Constant ..</span></div>
        <div className="flex items-center h-[18px] pl-[3px]"><Box on /><span className="ml-[11px] whitespace-nowrap">Relative ..</span></div>

        <div className="mt-[8px] rounded-[5px] overflow-hidden">
          <FieldRow label="X:" value="0m" />
          <FieldRow label="Y:" value="0m" />
          <FieldRow label="Z:" value="0m" />
        </div>
        <div className={`mt-[8px] flex flex-col ${shadow}`}>
          {["1.500", "0.000", "0.000"].map((v, i) => (
            <div key={i} className="h-[28px] last:h-[27px] pr-[3px] bg-[#565656] border-b border-[#3d3d3d] last:border-b-0 flex items-center justify-center">{v}</div>
          ))}
        </div>

        <div className="flex items-center h-[18px] mt-[18px] pl-[4px]"><Box /><span className="ml-[11px]">Merge</span></div>
        <div className="flex items-center h-[18px] mt-[18px] pl-[3px]"><Box /><span className="ml-[11px] whitespace-nowrap">Object Off..</span></div>

        <div className="flex items-center h-[26px] mt-[7px] pl-[4px] text-[#8e8e8e]"><Box dim /><span className="ml-[11px] whitespace-nowrap">First Last</span></div>
        <div className="h-[26px] mt-[7px] rounded-[5px] bg-[#2c2c2c] flex items-center pl-[6px]"><ObjIcon size={20} fill="#a0a0a0" line="#8c8c8c" /><Dropper /></div>

        <div className="h-[26px] mt-[5px] rounded-[5px] bg-[#474747] text-[#8e8e8e] flex items-center justify-center">Dist:0.01m</div>
        <div />
      </div>

      <div className="ml-[16px] mt-[6px] h-[20px] flex items-center shrink-0">UVs:</div>

      {/* uv offsets */}
      <div className={`ml-[6px] mt-[7px] w-[256px] h-[55px] rounded-[5px] overflow-hidden flex flex-col bg-[#565656] shrink-0 ${shadow}`}>
        <div className="h-[27px] flex border-b border-[#3d3d3d]">
          <div className="w-[127px] bg-[#5680c2] flex items-center pl-[15px]">U Offset:</div>
          <div className="flex-1 flex items-center justify-end pr-[15px]">0.0000</div>
        </div>
        <div className="flex-1 flex">
          <div className="w-[127px] bg-[#5680c2] flex items-center pl-[15px]">V Offset:</div>
          <div className="flex-1 flex items-center justify-end pr-[15px]">0.0000</div>
        </div>
      </div>

      <div className="flex items-center mt-[13px] ml-[16px] shrink-0">
        <span className="w-[53px] whitespace-nowrap">Start ..</span>
        <Btn className="w-[193px] pl-[5px]" bg="bg-[#1f1f1f]"><ObjIcon size={20} /><Dropper /></Btn>
      </div>
      <div className="flex items-center mt-[4px] ml-[16px] shrink-0">
        <span className="w-[53px] whitespace-nowrap">End C..</span>
        <Btn className="w-[193px] pl-[5px]" bg="bg-[#1f1f1f]"><ObjIcon size={20} /><Dropper /></Btn>
      </div>
    </div>
  );
}

function Properties() {
  return (
    <div className="mt-[4px] flex-1 rounded-[6px] overflow-hidden bg-[#3f3f3f] flex flex-col text-[14.4px] text-[#e0e0e0]">
      <div className="h-[34px] shrink-0 bg-[#3d3d3d] flex items-center pl-[11px]">
        <Btn className="w-[44px] justify-center gap-[2px]">
          <svg width="20" height="20" viewBox="0 0 20 20"><rect x="1" y="2" width="18" height="6.500" rx="3" fill="none" stroke="#c8c8c8" strokeWidth="1.300" /><rect x="2" y="3" width="9" height="4.500" rx="2" fill="#e6e6e6" /><rect x="1" y="11" width="18" height="6.500" rx="3" fill="#e6e6e6" /></svg>
          <Chev />
        </Btn>
        <div className="ml-[17px]"><ObjIcon size={22} /></div>
        <span className="ml-[11px]">Cube</span>
        <Pin size={20} color="#8c8c8c" className="ml-auto mr-[14px] rotate-45" />
      </div>
      <div className="flex-1 flex">
        <PropTabs />
        <div className="flex-1 bg-[#3f3f3f] pt-[12px]">
          <Btn className="ml-[12px] mr-[13px] pl-[10px]" bg="bg-[#2a2a2a]"><span>Add Modifier</span><Chev className="ml-auto mr-[7px]" /></Btn>
          <ModifierPanel />
        </div>
      </div>
    </div>
  );
}

function Mouse({ mode, tail }: { mode: "left" | "mid" | "right"; tail?: boolean }) {
  return (
    <svg width="22" height="22" viewBox="0 0 22 22" className="shrink-0">
      <rect x="1" y="1" width="14" height="20" rx="6" fill="none" stroke="#a8a8a8" strokeWidth="1.100" />
      {mode === "left" && <path d="M2.500 9V6a5 5 0 0 1 5-3.500V9z" fill="#b8b8b8" />}
      {mode === "mid" && <rect x="6" y="3" width="4" height="8" rx="1.500" fill="#b8b8b8" />}
      {mode === "right" && <path d="M13.500 9V6a5 5 0 0 0-5-3.500V9z" fill="#b8b8b8" />}
      {tail && <path d="M18 2v7M20.500 3v5" stroke="#a8a8a8" strokeWidth="1" />}
    </svg>
  );
}

function StatusBar() {
  return (
    <div className="h-[30px] shrink-0 bg-[#2b2b2b] flex items-center pt-[3px] text-[14.1px] text-[#a6a6a6] pl-[16px] whitespace-nowrap">
      <Mouse mode="left" />
      <span className="ml-[9px]">Select</span>
      <div className="ml-[16px]"><Mouse mode="left" tail /></div>
      <span className="ml-[11px]">Box Select</span>
      <div className="ml-[118px]"><Mouse mode="mid" /></div>
      <span className="ml-[10px]">Zoom View</span>
      <div className="ml-[202px]"><Mouse mode="right" tail /></div>
      <span className="ml-[17px]">Lasso Select</span>
      <span className="ml-auto mr-[44px]">Collection | Cube | Verts:1,216 | Faces:1,208 | Tris:2,416 | Objects:1/1 | Mem: 20.4 MB | v2.80.35</span>
    </div>
  );
}

export default function App() {
  return (
    <div className="relative w-[1920px] h-[1080px] overflow-hidden flex flex-col bg-[#1c1c1c] font-['DejaVu_Sans',sans-serif]">
      <TopBar />
      <ToolSettings />
      <div className="flex-1 min-h-0 flex pt-[2px] pb-[1px] gap-[3px]">
        <Viewport />
        <div className="flex-1 flex flex-col min-w-0">
          <Outliner />
          <Properties />
        </div>
      </div>
      <StatusBar />

      {/* red tutorial marks */}
      <div className="absolute left-[1639px] top-[375px] w-[135px] h-[39px] border-[7px] border-[#ed1c24]" />
      <div className="absolute left-[1638px] top-[442px] w-[272px] h-[45px] border-[8px] border-[#ed1c24]" />
      <div className="absolute left-[1774px] top-[515px] w-[135px] h-[96px] border-[7px] border-[#ed1c24]" />
      <span className="absolute left-[1625px] top-[485px] text-[30px] leading-[34px] font-bold text-[#ed1c24] font-['Liberation_Sans',sans-serif]">1</span>
      <span className="absolute left-[1886px] top-[617px] text-[30px] leading-[34px] font-bold text-[#ed1c24] font-['Liberation_Sans',sans-serif]">2</span>
      <span className="absolute left-[1782px] top-[397px] text-[30px] leading-[34px] font-bold text-[#ed1c24] font-['Liberation_Sans',sans-serif]">3</span>
    </div>
  );
}
